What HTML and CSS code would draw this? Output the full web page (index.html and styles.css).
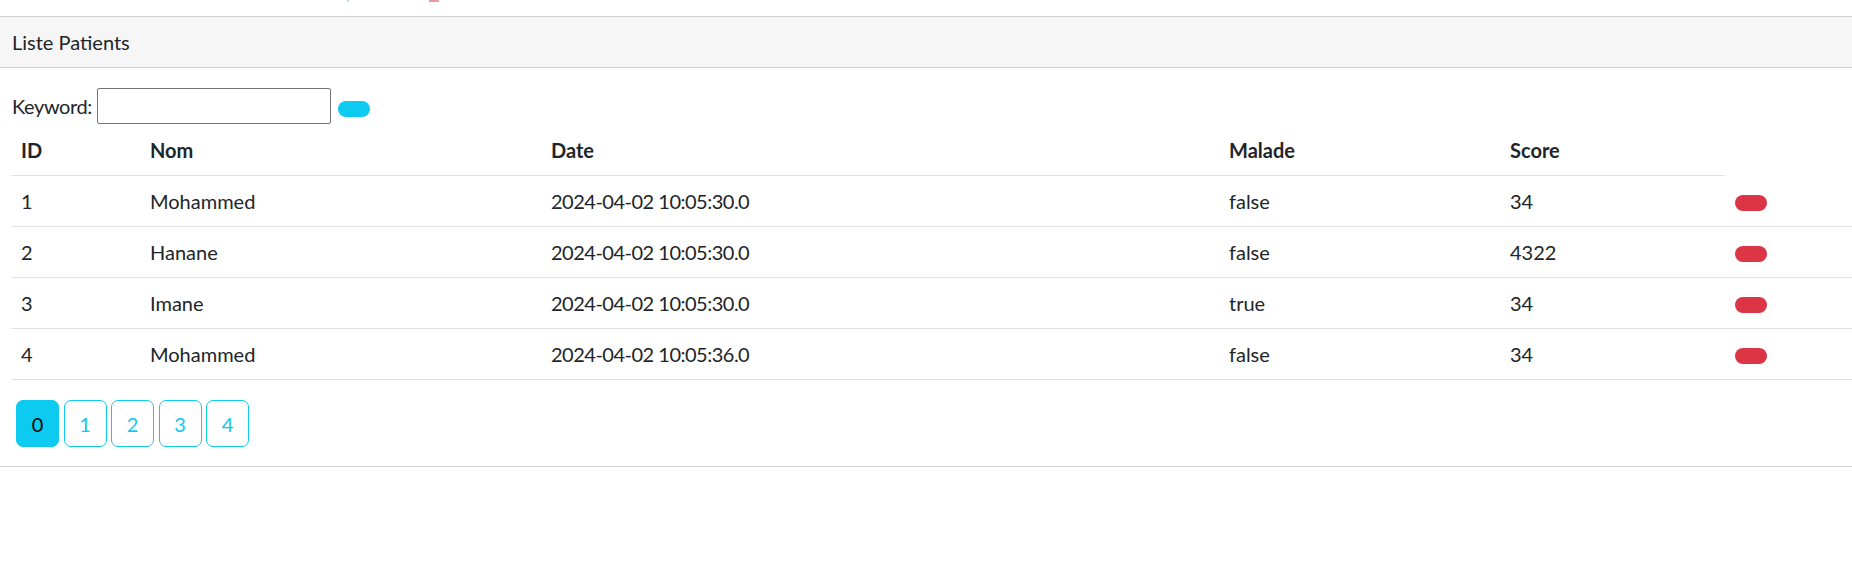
FILE: index.html
```html
<!DOCTYPE html>
<html lang="fr">
<head>
<meta charset="utf-8">
<title>Liste Patients</title>
<link rel="stylesheet" href="styles.css">
</head>
<body>
<div class="topbar"><span class="mark mark-green"></span><span class="mark mark-red"></span></div>
<div class="card">
  <div class="card-header">Liste Patients</div>
  <div class="card-body">
    <form class="search">
      <label for="kw">Keyword:</label>
      <input id="kw" type="text" class="search-input">
      <button type="button" class="btn btn-info"></button>
    </form>
    <table class="table">
      <colgroup>
        <col class="c-id"><col class="c-nom"><col class="c-date"><col class="c-malade"><col class="c-score"><col>
      </colgroup>
      <thead>
        <tr><th>ID</th><th>Nom</th><th>Date</th><th>Malade</th><th>Score</th></tr>
      </thead>
      <tbody>
        <tr><td>1</td><td>Mohammed</td><td class="date">2024-04-02 10:05:30.0</td><td>false</td><td>34</td><td><button type="button" class="btn btn-danger"></button></td></tr>
        <tr><td>2</td><td>Hanane</td><td class="date">2024-04-02 10:05:30.0</td><td>false</td><td>4322</td><td><button type="button" class="btn btn-danger"></button></td></tr>
        <tr><td>3</td><td>Imane</td><td class="date">2024-04-02 10:05:30.0</td><td>true</td><td>34</td><td><button type="button" class="btn btn-danger"></button></td></tr>
        <tr><td>4</td><td>Mohammed</td><td class="date">2024-04-02 10:05:36.0</td><td>false</td><td>34</td><td><button type="button" class="btn btn-danger"></button></td></tr>
      </tbody>
    </table>
    <ul class="pagination">
      <li><a class="page active">0</a></li>
      <li><a class="page">1</a></li>
      <li><a class="page">2</a></li>
      <li><a class="page">3</a></li>
      <li><a class="page">4</a></li>
    </ul>
  </div>
</div>
</body>
</html>
```
FILE: styles.css
```css
html, body {
  margin: 0;
  padding: 0;
  background: #fff;
}
body {
  font-family: Lato, "Noto Sans", sans-serif;
  font-size: 20px;
  line-height: 30px;
  color: #212529;
  overflow: hidden;
}
.topbar {
  height: 16px;
  display: flex;
  align-items: flex-start;
}
.mark {
  display: block;
}
.mark-green {
  margin-left: 347px;
  width: 2px;
  height: 2px;
  background: #b9e4c2;
}
.mark-red {
  margin-left: 80px;
  width: 10px;
  height: 2px;
  background: #ec9aa2;
}
.card {
  border-top: 1px solid #d0d0d0;
  border-bottom: 1px solid #d0d0d0;
}
.card-header {
  background: #f6f6f6;
  padding: 10px 12px;
  border-bottom: 1px solid #d0d0d0;
}
.card-body {
  padding: 20px 0 19px 11px;
}
.search {
  display: flex;
  align-items: center;
  height: 36px;
  margin: 0;
}
.search label {
  margin-left: 1px;
  margin-right: 5px;
  letter-spacing: -0.4px;
}
.search-input {
  box-sizing: border-box;
  width: 234px;
  height: 36px;
  border: 1px solid #767676;
  border-radius: 2px;
  margin: 0 7px 0 0;
  padding: 0 4px;
  font: inherit;
}
.btn {
  display: block;
  box-sizing: border-box;
  width: 32px;
  height: 16px;
  border: none;
  border-radius: 8px;
  padding: 0;
  margin: 0;
}
.btn-info {
  background: #0dcaf0;
  margin-top: 6px;
}
.btn-danger {
  background: #dc3545;
  margin-top: 9px;
}
.table {
  width: 100%;
  border-collapse: collapse;
  table-layout: fixed;
  margin-top: 1px;
}
.c-id { width: 129px; }
.c-nom { width: 401px; }
.c-date { width: 678px; }
.c-malade { width: 281px; }
.c-score { width: 225px; }
.table th,
.table td {
  padding: 10px;
  text-align: left;
  vertical-align: top;
  border-bottom: 1px solid #dee2e6;
  white-space: nowrap;
}
.table th {
  font-weight: 700;
}
.table td.date {
  letter-spacing: -0.5px;
}
.pagination {
  list-style: none;
  margin: 20px 0 0 0;
  padding: 0 0 0 5px;
  display: flex;
  gap: 4.5px;
}
.page {
  display: flex;
  align-items: center;
  justify-content: center;
  box-sizing: border-box;
  width: 43px;
  height: 47px;
  border: 1px solid #0dcaf0;
  border-radius: 7px;
  color: #0dcaf0;
}
.page.active {
  background: #0dcaf0;
  color: #000;
}
```
